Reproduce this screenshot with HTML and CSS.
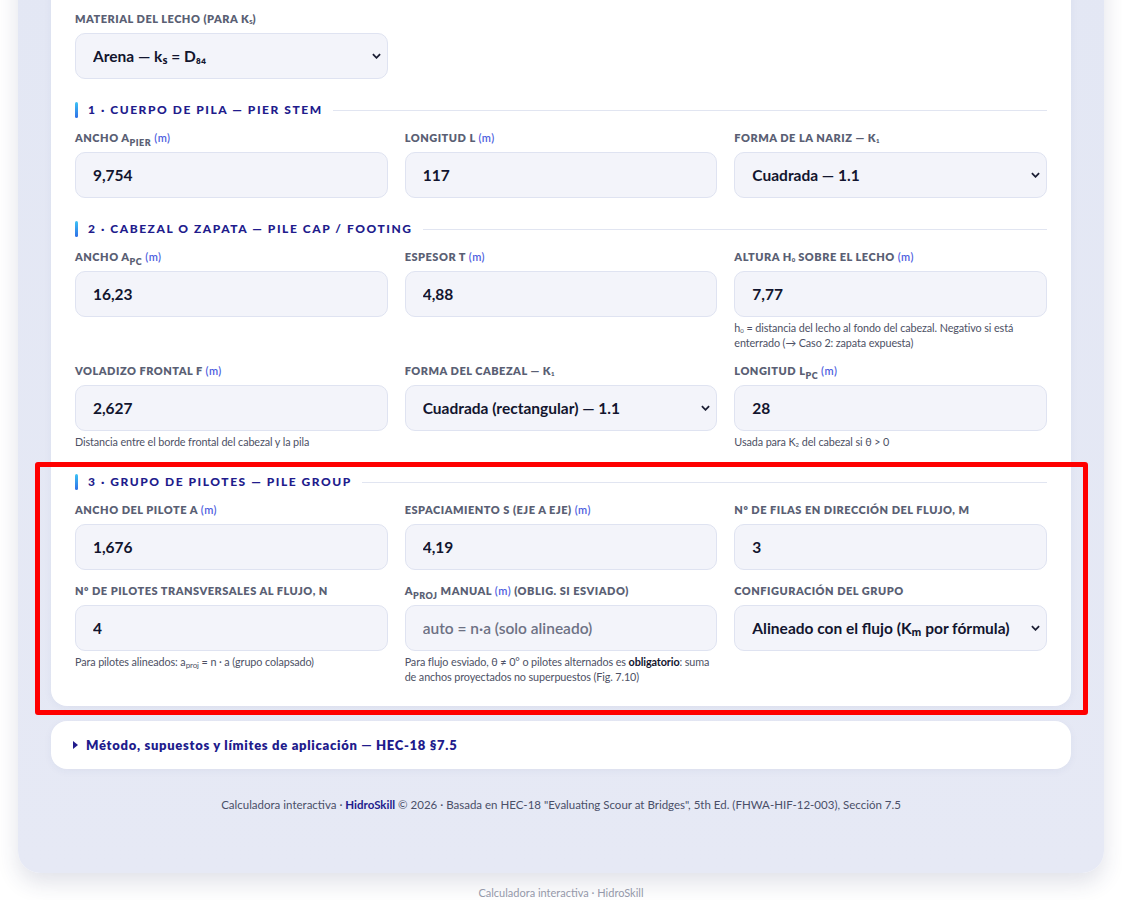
FILE: index.html
```html
<!DOCTYPE html>
<html lang="es">
<head>
    <meta charset="UTF-8">
    <meta name="viewport" content="width=device-width, initial-scale=1.0">
    <title>Socavación en pilas complejas — HidroSkill</title>
    <link rel="stylesheet" href="styles.css">
</head>
<body>
    <div class="shell">
        <main class="card">
            <div class="grid">
                <div class="field">
                    <label class="label" for="bed">Material del lecho (para K<sub class="tiny">s</sub>)</label>
                    <div class="select-wrap">
                        <select id="bed" class="control">
                            <option>Arena — kₛ = D₈₄</option>
                            <option>Grava — kₛ = 2D₈₄</option>
                        </select>
                        <svg class="chev" viewBox="0 0 10 6"><path d="M1 1l4 4 4-4" /></svg>
                    </div>
                </div>
            </div>

            <h2 class="section-title"><span>1 · Cuerpo de pila — Pier stem</span></h2>
            <div class="grid">
                <div class="field">
                    <label class="label">Ancho a<sub>pier</sub> <span class="unit">(m)</span></label>
                    <input class="control" type="text" value="9,754">
                </div>
                <div class="field">
                    <label class="label">Longitud L <span class="unit">(m)</span></label>
                    <input class="control" type="text" value="117">
                </div>
                <div class="field">
                    <label class="label">Forma de la nariz — K<sub class="tiny">1</sub></label>
                    <div class="select-wrap">
                        <select class="control">
                            <option>Cuadrada — 1.1</option>
                            <option>Redondeada — 1.0</option>
                        </select>
                        <svg class="chev" viewBox="0 0 10 6"><path d="M1 1l4 4 4-4" /></svg>
                    </div>
                </div>
            </div>

            <h2 class="section-title"><span>2 · Cabezal o zapata — Pile cap / footing</span></h2>
            <div class="grid">
                <div class="field">
                    <label class="label">Ancho a<sub>pc</sub> <span class="unit">(m)</span></label>
                    <input class="control" type="text" value="16,23">
                </div>
                <div class="field">
                    <label class="label">Espesor T <span class="unit">(m)</span></label>
                    <input class="control" type="text" value="4,88">
                </div>
                <div class="field">
                    <label class="label">Altura h<sub class="tiny">0</sub> sobre el lecho <span class="unit">(m)</span></label>
                    <input class="control" type="text" value="7,77">
                    <p class="hint">h<sub class="tiny">0</sub> = distancia del lecho al fondo del cabezal. Negativo si está enterrado (→ Caso 2: zapata expuesta)</p>
                </div>
                <div class="field">
                    <label class="label">Voladizo frontal f <span class="unit">(m)</span></label>
                    <input class="control" type="text" value="2,627">
                    <p class="hint">Distancia entre el borde frontal del cabezal y la pila</p>
                </div>
                <div class="field">
                    <label class="label">Forma del cabezal — K<sub class="tiny">1</sub></label>
                    <div class="select-wrap">
                        <select class="control">
                            <option>Cuadrada (rectangular) — 1.1</option>
                            <option>Redondeada — 1.0</option>
                        </select>
                        <svg class="chev" viewBox="0 0 10 6"><path d="M1 1l4 4 4-4" /></svg>
                    </div>
                </div>
                <div class="field">
                    <label class="label">Longitud L<sub>pc</sub> <span class="unit">(m)</span></label>
                    <input class="control" type="text" value="28">
                    <p class="hint">Usada para K<sub class="tiny">2</sub> del cabezal si θ &gt; 0</p>
                </div>
            </div>

            <h2 class="section-title after-hints"><span>3 · Grupo de pilotes — Pile group</span></h2>
            <div class="grid">
                <div class="field">
                    <label class="label">Ancho del pilote a <span class="unit">(m)</span></label>
                    <input class="control" type="text" value="1,676">
                </div>
                <div class="field">
                    <label class="label">Espaciamiento s (eje a eje) <span class="unit">(m)</span></label>
                    <input class="control" type="text" value="4,19">
                </div>
                <div class="field">
                    <label class="label">Nº de filas en dirección del flujo, m</label>
                    <input class="control" type="text" value="3">
                </div>
                <div class="field">
                    <label class="label">Nº de pilotes transversales al flujo, n</label>
                    <input class="control" type="text" value="4">
                    <p class="hint">Para pilotes alineados: a<sub class="low">proj</sub> = n · a (grupo colapsado)</p>
                </div>
                <div class="field">
                    <label class="label">a<sub>proj</sub> manual <span class="unit">(m)</span> (oblig. si esviado)</label>
                    <input class="control" type="text" placeholder="auto = n·a (solo alineado)">
                    <p class="hint">Para flujo esviado, θ ≠ 0° o pilotes alternados es <b>obligatorio</b>: suma de anchos proyectados no superpuestos (Fig. 7.10)</p>
                </div>
                <div class="field">
                    <label class="label">Configuración del grupo</label>
                    <div class="select-wrap">
                        <select class="control">
                            <option>Alineado con el flujo (Kₘ por fórmula)</option>
                            <option>Esviado o alternado</option>
                        </select>
                        <svg class="chev" viewBox="0 0 10 6"><path d="M1 1l4 4 4-4" /></svg>
                    </div>
                </div>
            </div>
        </main>

        <details class="card method">
            <summary>Método, supuestos y límites de aplicación — HEC-18 §7.5</summary>
            <p>Superposición de componentes: pila, cabezal y grupo de pilotes.</p>
        </details>

        <p class="credits">Calculadora interactiva · <b>HidroSkill</b> © 2026 · Basada en HEC-18 "Evaluating Scour at Bridges", 5th Ed. (FHWA-HIF-12-003), Sección 7.5</p>
    </div>

    <p class="bottom-note">Calculadora interactiva · HidroSkill</p>

    <div class="highlight"></div>
</body>
</html>
```

FILE: styles.css
```css
body {
    margin: 0;
    background: #fff;
    font-family: Lato, "Noto Sans", sans-serif;
    color: #14173a;
    position: relative;
}

.shell {
    margin: -40px 18px 0;
    padding: 0 33px 61px;
    background: linear-gradient(180deg, #e3e7f4 0%, #e6e9f5 100%);
    border-radius: 0 0 22px 22px;
    box-shadow: 0 10px 22px rgba(40, 50, 100, 0.14);
}

.card {
    display: block;
    background: #fff;
    border-radius: 16px;
    padding: 52px 24px 22px;
    box-shadow: 0 2px 8px rgba(40, 50, 110, 0.05);
}

.grid {
    display: grid;
    grid-template-columns: repeat(3, 1fr);
    column-gap: 17px;
    row-gap: 14px;
}

.field {
    display: flex;
    flex-direction: column;
}

.label {
    font-size: 11px;
    line-height: 14px;
    font-weight: 800;
    text-transform: uppercase;
    letter-spacing: 0.5px;
    color: #5a5f74;
    margin-bottom: 7px;
}

.label sub {
    font-size: 9px;
    line-height: 0;
    vertical-align: -4px;
}

.label sub.tiny,
.hint sub.tiny {
    font-size: 6px;
    line-height: 0;
    vertical-align: -1px;
    letter-spacing: 0;
}

.unit {
    color: #4f5fe0;
    font-weight: 600;
    text-transform: none;
}

.control {
    box-sizing: border-box;
    width: 100%;
    height: 46px;
    padding: 0 17px;
    border: 1px solid #dfe3f1;
    border-radius: 10px;
    background: #f3f4fa;
    font-family: inherit;
    font-size: 15.5px;
    font-weight: 700;
    color: #12152e;
    outline: none;
    appearance: none;
    -webkit-appearance: none;
}

.control::placeholder {
    color: #6d7184;
    font-weight: 600;
}

.select-wrap {
    position: relative;
}

.chev {
    position: absolute;
    right: 7px;
    top: 20px;
    width: 9px;
    height: 6px;
    fill: none;
    stroke: #1b1e33;
    stroke-width: 2;
    pointer-events: none;
}

.hint {
    margin: 3px 0 0;
    font-size: 10.8px;
    line-height: 15px;
    letter-spacing: -0.1px;
    color: #4d5165;
}

.hint b {
    color: #12152e;
}

.hint sub.low {
    font-size: 8px;
    line-height: 0;
    vertical-align: -2px;
}

.section-title {
    display: flex;
    align-items: center;
    gap: 10px;
    margin: 23px 0 13px;
    font-size: 12px;
    line-height: 16px;
    font-weight: 900;
    text-transform: uppercase;
    letter-spacing: 1.55px;
    color: #211b8c;
}

.section-title.after-hints {
    margin-top: 25px;
}

.section-title::before {
    content: "";
    width: 3px;
    height: 16px;
    border-radius: 2px;
    background: linear-gradient(180deg, #3cc3f5, #2f6fe6);
}

.section-title::after {
    content: "";
    flex: 1;
    height: 1px;
    background: #e1e5f1;
}

.method {
    margin-top: 15px;
    padding: 17px 22px;
}

.method summary {
    list-style: none;
    display: flex;
    align-items: center;
    gap: 8px;
    font-size: 13px;
    line-height: 14px;
    font-weight: 800;
    letter-spacing: 0.7px;
    color: #211b8c;
    cursor: pointer;
}

.method summary::-webkit-details-marker {
    display: none;
}

.method summary::before {
    content: "";
    border-left: 5px solid #211b8c;
    border-top: 4px solid transparent;
    border-bottom: 4px solid transparent;
}

.credits {
    margin: 29px 0 0;
    text-align: center;
    font-size: 11.5px;
    line-height: 14px;
    color: #4a4f68;
}

.credits b {
    color: #211b8c;
}

.bottom-note {
    margin: 13px 0 0;
    text-align: center;
    font-size: 11px;
    line-height: 14px;
    color: #9599aa;
}

.highlight {
    position: absolute;
    left: 35px;
    top: 462px;
    width: 1053px;
    height: 253px;
    box-sizing: border-box;
    border: 5px solid #ff0000;
    border-radius: 3px;
    pointer-events: none;
}
```
